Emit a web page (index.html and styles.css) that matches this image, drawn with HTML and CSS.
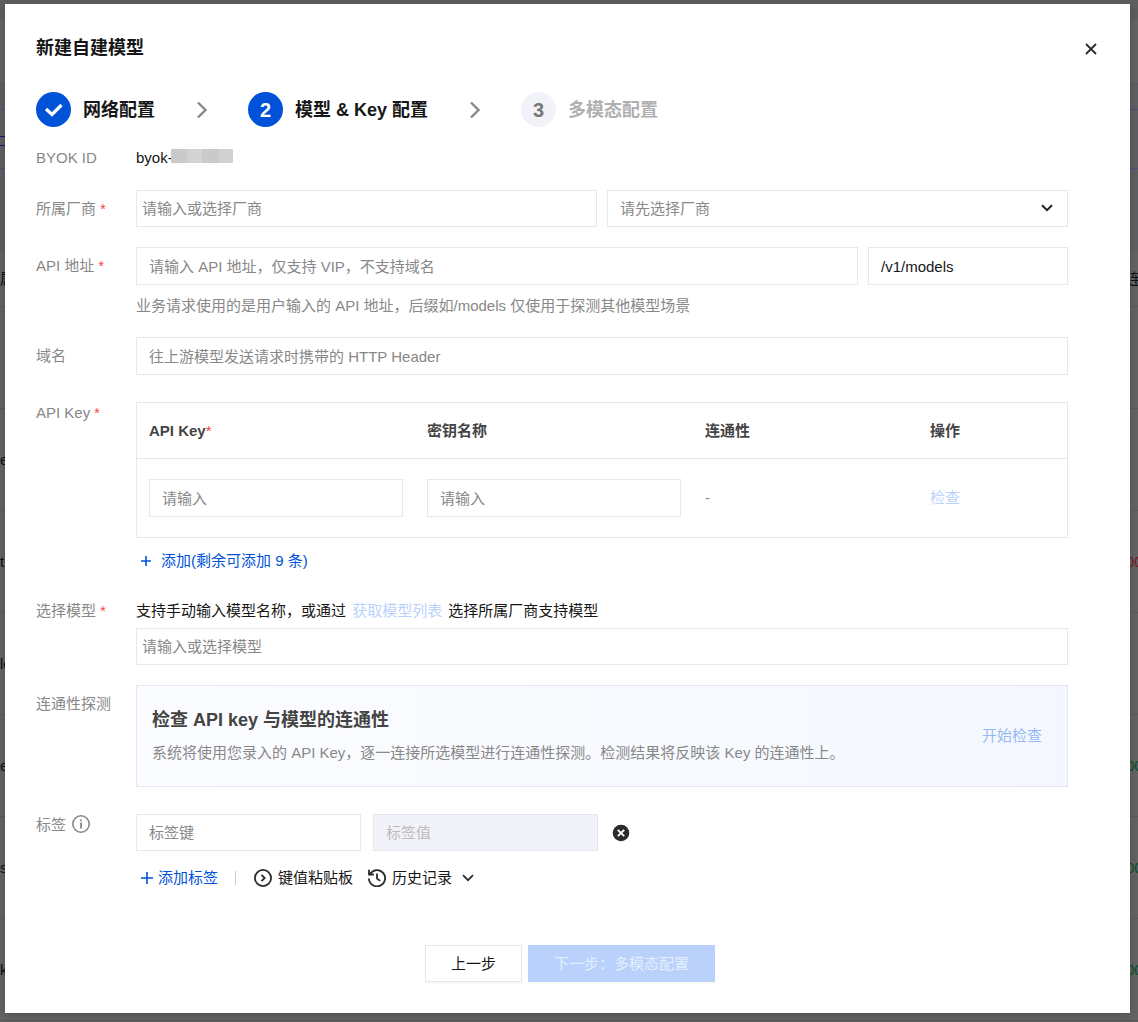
FILE: index.html
```html
<!DOCTYPE html>
<html lang="zh-CN">
<head>
  <meta charset="UTF-8" />
  <meta name="viewport" content="width=device-width, initial-scale=1.0"/>
  <title>新建自建模型</title>
  <link rel="stylesheet" href="styles.css">
</head>
<body>
  <!-- page behind the dialog -->
  <div class="page" aria-hidden="true">
    <div class="page-top"></div>
    <div class="page-title"></div>
    <div class="page-tabs"></div>
    <div class="page-banner"><i class="page-tab-line"></i></div>
    <div class="page-filter"></div>
    <div class="page-row page-head"><span>属</span><span class="end">连通</span></div>
    <div class="page-row"></div>
    <div class="page-row"><span>e</span></div>
    <div class="page-row"><span>t</span><span class="end bad">00</span></div>
    <div class="page-row"><span>lo</span></div>
    <div class="page-row"><span>e</span><span class="end good">00</span></div>
    <div class="page-row"><span>s</span><span class="end good">00</span></div>
    <div class="page-row"><span>ke</span><span class="end good">00</span></div>
    <div class="page-row"></div>
  </div>

  <div class="dialog" role="dialog" aria-labelledby="dialog-title">
    <div class="dialog-header">
      <h3 id="dialog-title">新建自建模型</h3>
      <button type="button" class="close-btn" aria-label="关闭">
        <svg width="24" height="24" viewBox="0 0 24 24"><path d="M6 8l10 10M16 8l-10 10" fill="none" stroke="#2b2b2b" stroke-width="1.8"/></svg>
      </button>
    </div>

    <ol class="steps">
      <li class="step">
        <span class="step-icon">
          <svg width="20" height="20" viewBox="0 0 20 20"><path d="M2 9l6 5.500 9.500-9.500" fill="none" stroke="#fff" stroke-width="3.200"/></svg>
        </span>
        <span>网络配置</span>
      </li>
      <li class="step-arrow" aria-hidden="true">
        <svg width="12" height="18" viewBox="0 0 12 18"><path d="M2 1.500l7.500 7.500L2 16.500" fill="none" stroke="#888" stroke-width="2.4"/></svg>
      </li>
      <li class="step">
        <span class="step-icon">2</span>
        <span>模型 &amp; Key 配置</span>
      </li>
      <li class="step-arrow" aria-hidden="true">
        <svg width="12" height="18" viewBox="0 0 12 18"><path d="M2 1.500l7.500 7.500L2 16.500" fill="none" stroke="#888" stroke-width="2.4"/></svg>
      </li>
      <li class="step step-wait">
        <span class="step-icon">3</span>
        <span>多模态配置</span>
      </li>
    </ol>

    <form class="form">
      <div class="form-row form-row-text">
        <span class="label">BYOK ID</span>
        <div class="byok">byok-<span class="mask"></span></div>
      </div>

      <div class="form-row">
        <label class="label" for="vendor">所属厂商 <em>*</em></label>
        <div class="group group-half">
          <input type="text" id="vendor" class="input input-tight" placeholder="请输入或选择厂商">
          <div class="select-box">
            <select class="input select" aria-label="厂商模型">
              <option>请先选择厂商</option>
            </select>
            <svg class="select-arrow" width="12" height="8" viewBox="0 0 12 8"><path d="M1 1.200l5 5 5-5" fill="none" stroke="#222" stroke-width="2"/></svg>
          </div>
        </div>
      </div>

      <div class="form-row">
        <label class="label" for="api-url">API 地址 <em>*</em></label>
        <div>
          <div class="group">
            <input type="text" id="api-url" class="input input-tall" placeholder="请输入 API 地址，仅支持 VIP，不支持域名">
            <input type="text" class="input input-tall input-suffix" value="/v1/models" aria-label="后缀">
          </div>
          <p class="help">业务请求使用的是用户输入的 API 地址，后缀如/models 仅使用于探测其他模型场景</p>
        </div>
      </div>

      <div class="form-row">
        <label class="label" for="domain">域名</label>
        <input type="text" id="domain" class="input input-tall" placeholder="往上游模型发送请求时携带的 HTTP Header">
      </div>

      <div class="form-row form-row-text form-row-far">
        <span class="label">API Key <em>*</em></span>
        <div>
          <table class="key-table">
            <thead>
              <tr>
                <th class="col-key">API Key<em>*</em></th>
                <th class="col-key">密钥名称</th>
                <th class="col-state">连通性</th>
                <th>操作</th>
              </tr>
            </thead>
            <tbody>
              <tr>
                <td><input type="text" class="input input-tall" placeholder="请输入" aria-label="API Key"></td>
                <td><input type="text" class="input input-tall" placeholder="请输入" aria-label="密钥名称"></td>
                <td class="muted">-</td>
                <td><button type="button" class="link" disabled>检查</button></td>
              </tr>
            </tbody>
          </table>
          <button type="button" class="link add-key">
            <svg width="12" height="12" viewBox="0 0 12 12"><path d="M6 1v10M1 6h10" fill="none" stroke="#0052d9" stroke-width="1.600"/></svg>
            添加(剩余可添加 9 条)
          </button>
        </div>
      </div>

      <div class="form-row form-row-text form-row-far">
        <label class="label" for="model">选择模型 <em>*</em></label>
        <div>
          <p class="tip">支持手动输入模型名称，或通过 <button type="button" class="link" disabled>获取模型列表</button> 选择所属厂商支持模型</p>
          <input type="text" id="model" class="input input-tight" placeholder="请输入或选择模型">
        </div>
      </div>

      <div class="form-row">
        <span class="label">连通性探测</span>
        <div class="probe">
          <div>
            <h4>检查 API key 与模型的连通性</h4>
            <p>系统将使用您录入的 API Key，逐一连接所选模型进行连通性探测。检测结果将反映该 Key 的连通性上。</p>
          </div>
          <button type="button" class="link" disabled>开始检查</button>
        </div>
      </div>

      <div class="form-row form-row-text form-row-far">
        <label class="label label-icon" for="tag-key">标签
          <svg width="20" height="20" viewBox="0 0 20 20"><circle cx="10" cy="10" r="8.200" fill="none" stroke="#888" stroke-width="1.600"/><path d="M10 8.500v6M10 5.500v1.800" fill="none" stroke="#888" stroke-width="1.800"/></svg>
        </label>
        <div>
          <div class="tag-line">
            <input type="text" id="tag-key" class="input input-tag" placeholder="标签键">
            <input type="text" class="input input-tag" placeholder="标签值" aria-label="标签值" disabled>
            <button type="button" class="link" aria-label="删除标签">
              <svg width="22" height="18" viewBox="0 0 22 18"><circle cx="11" cy="9" r="8.300" fill="#2b2b2b"/><path d="M7.800 5.800l6.400 6.400M14.200 5.800l-6.400 6.400" fill="none" stroke="#fff" stroke-width="1.900"/></svg>
            </button>
          </div>
          <div class="tag-actions">
            <button type="button" class="link">
              <svg width="12" height="12" viewBox="0 0 12 12"><path d="M6 0v12M0 6h12" fill="none" stroke="#0052d9" stroke-width="1.600"/></svg>
              添加标签
            </button>
            <span class="divider"></span>
            <button type="button" class="link link-dark">
              <svg width="18" height="18" viewBox="0 0 18 18"><circle cx="9" cy="9" r="8.100" fill="none" stroke="#2b2b2b" stroke-width="1.800"/><path d="M7.500 5.800L10.700 9l-3.200 3.200" fill="none" stroke="#2b2b2b" stroke-width="1.800"/></svg>
              键值粘贴板
            </button>
            <button type="button" class="link link-dark">
              <svg width="18" height="18" viewBox="0 0 18 18"><path d="M2.200 4.800A8.100 8.100 0 1 1 .9 9.500M1 .8v4.700h4.800M9 4.500v5l3.200 2.400" fill="none" stroke="#2b2b2b" stroke-width="1.800"/></svg>
              历史记录
              <svg class="history-arrow" width="12" height="8" viewBox="0 0 12 8"><path d="M1 1.200l5 5 5-5" fill="none" stroke="#2b2b2b" stroke-width="1.800"/></svg>
            </button>
          </div>
        </div>
      </div>
    </form>

    <div class="dialog-footer">
      <button type="button" class="btn">上一步</button>
      <button type="button" class="btn btn-primary" disabled>下一步：多模态配置</button>
    </div>
  </div>
</body>
</html>
```
FILE: styles.css
```css
* {
  box-sizing: border-box;
  margin: 0;
  padding: 0;
}

body {
  position: relative;
  min-height: 100vh;
  padding: 4px 8px 9px 5px;
  background-color: #636363;
  color: #161616;
  font-family: "Liberation Sans", "Noto Sans CJK SC", sans-serif;
  font-size: 15px;
  line-height: 22px;
}

button,
input,
select {
  font: inherit;
  color: inherit;
}

em {
  color: #f64041;
  font-style: normal;
}

svg {
  display: block;
  flex: none;
}

/* page behind the dialog */
.page {
  position: absolute;
  inset: 0;
  overflow: hidden;
  color: #101010;
}

.page-top {
  height: 20px;
  background-color: #5e5e5e;
}

.page-title {
  height: 64px;
  border-bottom: 1px solid #585858;
}

.page-tabs {
  height: 26px;
  background-color: #5e5f62;
  border-bottom: 1px solid #4d4d78;
}

.page-banner {
  height: 59px;
  padding-top: 26px;
  background-color: #606062;
  border-bottom: 1px solid #504f7c;
}

.page-tab-line {
  display: block;
  width: 5px;
  height: 10px;
  border-top: 1px solid #14147c;
  border-bottom: 1px solid #14147c;
}

.page-filter {
  height: 82px;
  background-color: #5d5f63;
}

.page-row {
  display: flex;
  align-items: center;
  justify-content: space-between;
  height: 102px;
  border-bottom: 1px solid #595959;
}

.page-head {
  height: 56px;
}

.page-row .end {
  width: 12px;
  margin-left: auto;
  white-space: nowrap;
}

.bad {
  color: #7c1726;
}

.good {
  color: #06502c;
}

.dialog {
  position: relative;
  padding: 32px 26px 31px 31px;
  background-color: #fff;
  box-shadow: 0 2px 8px rgba(0, 0, 0, 0.2);
}

.dialog-header {
  display: flex;
  align-items: center;
  justify-content: space-between;
}

h3,
h4 {
  font-size: 18px;
  line-height: 24px;
}

.close-btn {
  border: 0;
  background: none;
  cursor: pointer;
}

/* steps */
.steps {
  display: flex;
  align-items: center;
  margin-top: 32px;
  list-style: none;
  font-size: 18px;
  font-weight: bold;
}

.step {
  display: flex;
  align-items: center;
  gap: 12px;
}

.step-icon {
  display: flex;
  align-items: center;
  justify-content: center;
  width: 35px;
  height: 35px;
  border-radius: 50%;
  background-color: #0052d9;
  color: #fff;
  font-size: 20px;
}

.step-arrow {
  margin: 0 40px 0 41px;
}

.step-wait {
  color: #b0b0b0;
}

.step-wait .step-icon {
  background-color: #f2f3f8;
  color: #777;
}

/* form */
.form {
  display: flex;
  flex-direction: column;
  gap: 20px;
  margin-top: 20px;
  padding-right: 36px;
}

.form-row {
  display: grid;
  grid-template-columns: 100px minmax(0, 1fr);
}

.form-row-far {
  margin-top: 7px;
}

.label {
  padding-top: 8px;
  color: #888;
}

.form-row-text .label {
  padding-top: 0;
}

.label em {
  font-size: 14px;
}

.label-icon {
  display: flex;
  gap: 5px;
}

.byok {
  display: flex;
  align-items: flex-start;
  padding-bottom: 1px;
}

.mask {
  width: 62px;
  height: 14px;
  margin: 2px 0 0 -2px;
  background: linear-gradient(to right, #cacaca 25%, #d3d3d3 25% 50%, #cacaca 50% 75%, #d1d1d1 75%);
}

.group {
  display: flex;
  gap: 10px;
}

.group-half {
  display: grid;
  grid-template-columns: 1fr 1fr;
}

.input {
  display: block;
  flex: 1;
  width: 100%;
  min-width: 0;
  height: 37px;
  padding: 0 12px;
  border: 1px solid #e5e6ef;
  border-radius: 0;
  background-color: #fff;
  outline: none;
}

.input::placeholder {
  color: #888;
}

.input:disabled {
  background-color: #f2f3f8;
}

.input:disabled::placeholder {
  color: #bbb;
}

.input-tall {
  height: 38px;
}

.input-tight {
  padding: 0 5px;
}

.input-suffix {
  flex: 0 0 200px;
}

.select-box {
  position: relative;
}

.select {
  appearance: none;
  color: #888;
}

.select-arrow {
  position: absolute;
  top: 14px;
  right: 15px;
  pointer-events: none;
}

.help {
  margin-top: 10px;
  color: #888;
}

.key-table {
  width: 100%;
  border: 1px solid #e5e6ef;
  border-spacing: 0;
  table-layout: fixed;
}

.key-table th,
.key-table td {
  padding: 0 12px;
  text-align: left;
}

.key-table th {
  height: 56px;
  border-bottom: 1px solid #e5e6ef;
  color: #444;
}

.key-table td {
  height: 78px;
}

.key-table em {
  font-weight: normal;
}

.col-key {
  width: 278px;
}

.col-state {
  width: 225px;
}

.key-table .muted {
  color: #888;
}

.link {
  display: inline-flex;
  align-items: center;
  gap: 5px;
  border: 0;
  background: none;
  color: #0052d9;
  cursor: pointer;
}

.link:disabled {
  color: #bad2fb;
  cursor: not-allowed;
}

.link-dark {
  gap: 6px;
  color: #161616;
}

.add-key {
  gap: 9px;
  margin-top: 12px;
  padding-left: 4px;
}

.tip {
  margin-bottom: 6px;
}

.tip .link {
  margin: 0 2px;
}

.probe {
  display: flex;
  align-items: center;
  justify-content: space-between;
  min-height: 102px;
  padding: 0 25px 0 15px;
  border: 1px solid #e3e7ef;
  background: linear-gradient(to right, #fbfcff, #f4f8fe);
}

.probe h4 {
  margin-bottom: 10px;
  color: #444;
}

.probe p {
  color: #888;
}

.probe .link {
  color: #94b9f4;
}

.tag-line {
  display: flex;
  gap: 12px;
}

.input-tag {
  flex: 0 1 225px;
}

.tag-actions {
  display: flex;
  align-items: center;
  margin-top: 16px;
  padding-left: 5px;
}

.divider {
  width: 1px;
  height: 14px;
  margin: 0 18px 0 17px;
  background-color: #ccc;
}

.link-dark + .link-dark {
  margin-left: 15px;
}

.history-arrow {
  margin-left: 4px;
}

.dialog-footer {
  display: flex;
  justify-content: center;
  gap: 6px;
  margin-top: 56px;
}

.btn {
  height: 37px;
  padding: 0 25px;
  border: 1px solid #e5e6ef;
  background-color: #fff;
  box-shadow: 0 2px 2px rgba(0, 0, 0, 0.03);
  cursor: pointer;
}

.btn-primary {
  border-color: #bad2fb;
  background-color: #bad2fb;
  color: #e4eefe;
}
```
